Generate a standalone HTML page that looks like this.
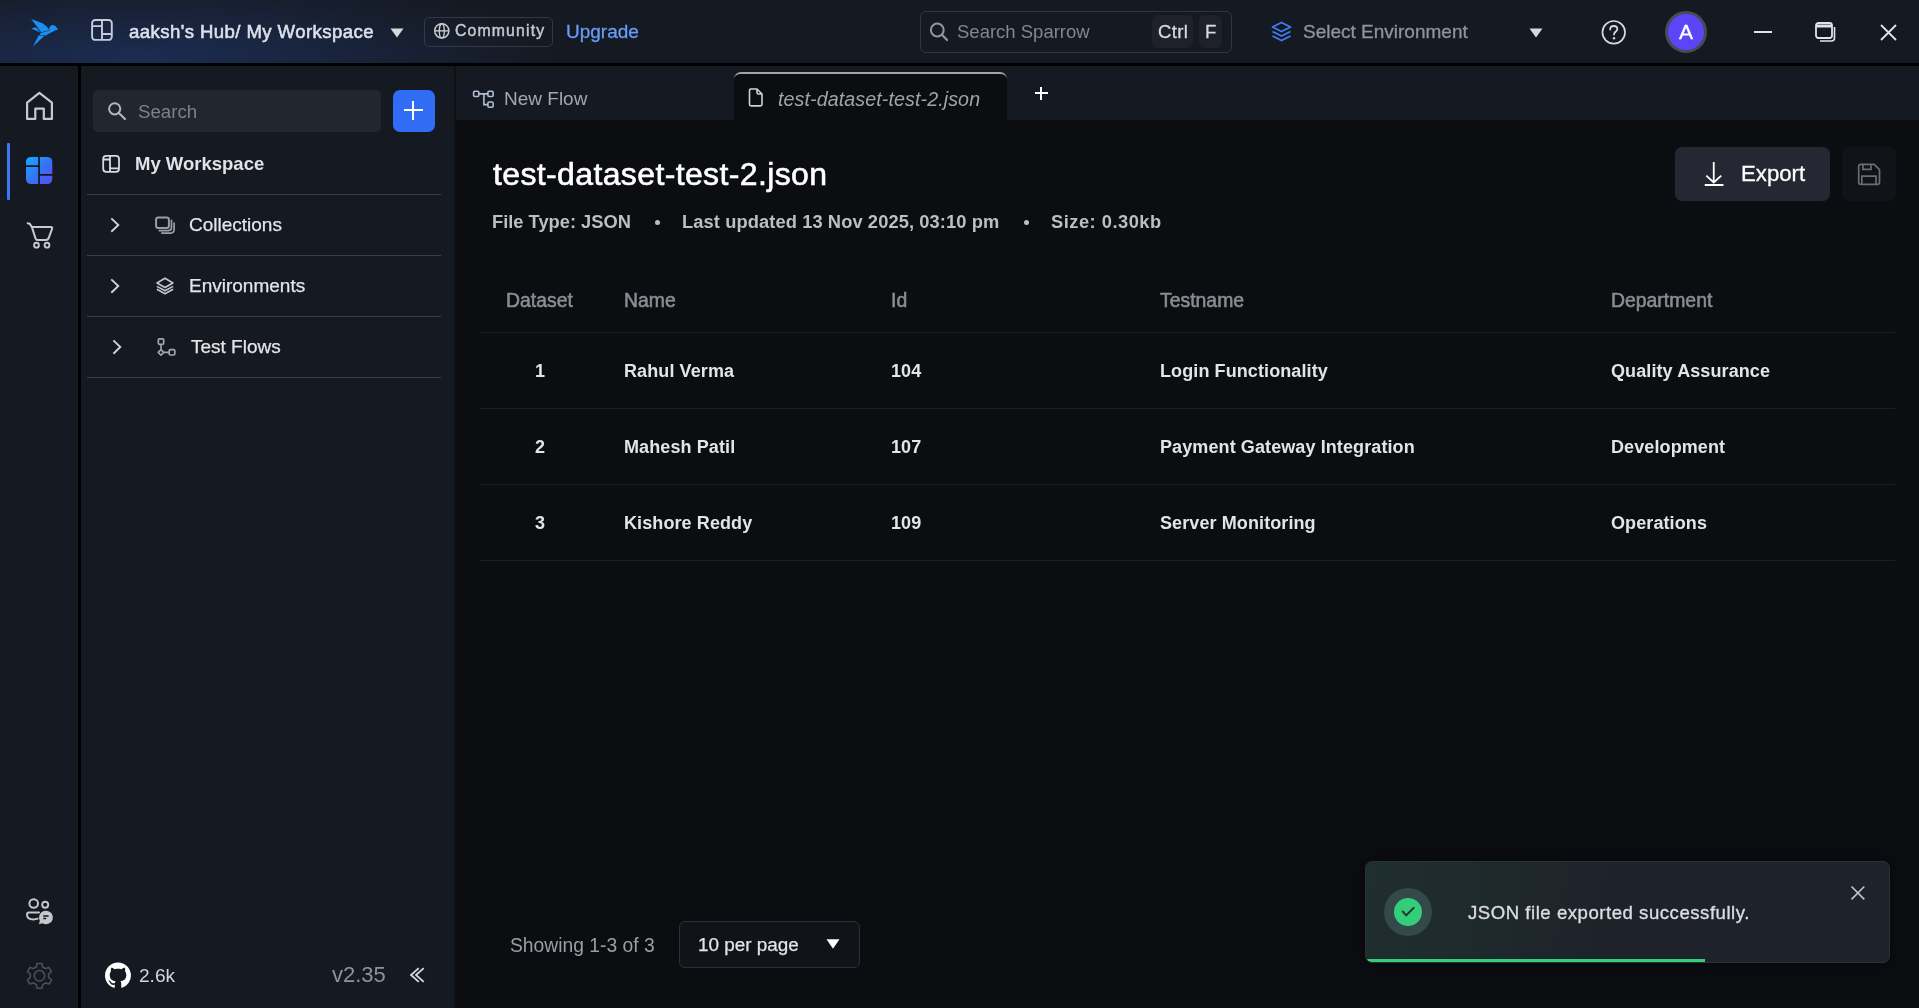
<!DOCTYPE html>
<html><head><meta charset="utf-8">
<style>
*{box-sizing:border-box;margin:0;padding:0}
html,body{width:1919px;height:1008px;overflow:hidden;background:#0b0d11;font-family:"Liberation Sans",sans-serif}
.a{position:absolute}
.t{position:absolute;line-height:1;white-space:nowrap;will-change:transform}
svg{position:absolute;overflow:visible}
#hdr{left:0;top:0;width:1919px;height:63px;background:#151922}
#glow{left:0;top:0;width:1919px;height:63px;background:radial-gradient(ellipse 420px 90px at 140px 63px,rgba(30,52,100,0.75),rgba(30,52,100,0) 100%)}
#sep{left:0;top:63px;width:1919px;height:3px;background:#000}
#bar{left:0;top:66px;width:78px;height:942px;background:#151921}
#vsep{left:78px;top:66px;width:3px;height:942px;background:#000}
#side{left:81px;top:66px;width:373px;height:942px;background:#151921}
#vsep2{left:454px;top:66px;width:2px;height:942px;background:#0f1115}
#main{left:456px;top:66px;width:1463px;height:942px;background:#0b0d11}
#tabs{left:456px;top:66px;width:1463px;height:54px;background:#151921}
.div{position:absolute;left:87px;width:354px;height:1px;background:#3a3e46}
.tdiv{position:absolute;left:480px;width:1415px;height:1px;background:#1b1e27}
.hd{color:#8a8d93;font-size:19.4px;-webkit-text-stroke:0.55px #8a8d93}
.cell{color:#e3e4e7;font-size:18px;font-weight:700;margin-top:-1px;letter-spacing:0.1px}
</style></head><body>
<div id="hdr" class="a"></div>
<div id="glow" class="a"></div>
<div id="sep" class="a"></div>
<div id="bar" class="a"></div>
<div id="vsep" class="a"></div>
<div id="side" class="a"></div>
<div id="vsep2" class="a"></div>
<div id="main" class="a"></div>
<div id="tabs" class="a"></div>

<!-- HEADER -->
<!-- logo -->
<svg style="left:25px;top:14px" width="40" height="36" viewBox="0 0 40 36">
  <g fill="#1a90f2">
  <path d="M6.2 5 L17.5 9.3 Q22 12 24.6 15.9 L16.2 18.2 Z"/>
  <path d="M6.2 14.4 Q10 13.1 11.6 13.8 L15.3 18.6 Z"/>
  <path d="M15 19.3 L24.4 16.4 Q23.8 11 27.5 10.9 Q30.6 10.9 31.6 13.5 L33.2 15.6 L30.4 16.2 L20.5 21.6 L15.5 21.2 Z"/>
  <path d="M13.6 21.2 L8 32.4 L19.2 22 Z"/>
  </g>
</svg>
<!-- workspace icon -->
<svg style="left:85px;top:12px" width="40" height="36" viewBox="0 0 40 36">
  <rect x="7.1" y="8" width="19.7" height="19.9" rx="3.2" fill="none" stroke="#c5cbdd" stroke-width="1.9"/>
  <path d="M17 8 V27.9 M7.1 14.1 H17 M17 22 H26.8" stroke="#c5cbdd" stroke-width="1.9" fill="none"/>
</svg>
<div class="t" style="left:129px;top:22.5px;font-size:18.6px;font-weight:400;color:#dde1ec;letter-spacing:0.41px;-webkit-text-stroke:0.55px #dde1ec">aaksh's Hub/ My Workspace</div>
<svg style="left:390px;top:28px" width="14" height="10" viewBox="0 0 14 10"><path d="M0.5 0.5 H13.5 L7 9.5 Z" fill="#d6d8dc"/></svg>

<div class="a" style="left:424px;top:17px;width:129px;height:30px;border:1px solid #343840;border-radius:5px"></div>
<svg style="left:420px;top:12px" width="40" height="40" viewBox="0 0 40 40">
  <circle cx="21.8" cy="18.85" r="7.1" fill="none" stroke="#c9cacd" stroke-width="1.5"/>
  <ellipse cx="21.8" cy="18.85" rx="2.5" ry="7.1" fill="none" stroke="#c9cacd" stroke-width="1.4"/>
  <path d="M14.7 18.85 H28.9" stroke="#c9cacd" stroke-width="1.4"/>
</svg>
<div class="t" style="left:454.5px;top:23px;font-size:15.8px;font-weight:400;color:#c8c9cc;letter-spacing:1.15px;-webkit-text-stroke:0.45px #c8c9cc">Community</div>
<div class="t" style="left:566px;top:22px;font-size:19px;color:#6a9cf6;-webkit-text-stroke:0.3px #6a9cf6">Upgrade</div>

<!-- search sparrow -->
<div class="a" style="left:920px;top:11px;width:312px;height:42px;border:1px solid #30343c;border-radius:6px"></div>
<svg style="left:930px;top:23px" width="18" height="18" viewBox="0 0 18 18">
  <circle cx="7.3" cy="7" r="6.4" fill="none" stroke="#93969c" stroke-width="2"/>
  <path d="M12 11.8 L17 17" stroke="#93969c" stroke-width="2.2" stroke-linecap="round"/>
</svg>
<div class="t" style="left:957px;top:23px;font-size:18.5px;color:#84878d">Search Sparrow</div>
<div class="a" style="left:1152px;top:15px;width:41px;height:33px;background:#1e212a;border-radius:6px"></div>
<div class="t" style="left:1158px;top:23px;font-size:18.5px;color:#d8dadd;letter-spacing:0.35px;-webkit-text-stroke:0.3px #d8dadd">Ctrl</div>
<div class="a" style="left:1199px;top:15px;width:23px;height:33px;background:#1e212a;border-radius:6px"></div>
<div class="t" style="left:1205px;top:23px;font-size:18.5px;color:#d8dadd;-webkit-text-stroke:0.3px #d8dadd">F</div>

<!-- env -->
<svg style="left:1271px;top:21px" width="21" height="21" viewBox="0 0 21 21">
  <path d="M10.5 1.5 L19.5 6 L10.5 10.5 L1.5 6 Z" fill="none" stroke="#3f7cf6" stroke-width="1.8" stroke-linejoin="round"/>
  <path d="M1.5 10.5 L10.5 15 L19.5 10.5 M1.5 15 L10.5 19.5 L19.5 15" fill="none" stroke="#3f7cf6" stroke-width="1.8" stroke-linejoin="round"/>
</svg>
<div class="t" style="left:1303px;top:22.3px;font-size:19px;color:#929498;-webkit-text-stroke:0.3px #929498">Select Environment</div>
<svg style="left:1529px;top:28px" width="14" height="10" viewBox="0 0 14 10"><path d="M0.5 0.5 H13.5 L7 9.5 Z" fill="#d6d8dc"/></svg>

<svg style="left:1601px;top:20px" width="26" height="25" viewBox="0 0 26 25">
  <circle cx="12.75" cy="12.3" r="11.3" fill="none" stroke="#d6d8dc" stroke-width="1.7"/>
  <path d="M9.2 9.5 C9.2 7.3 10.8 6 12.8 6 C14.8 6 16.3 7.3 16.3 9.2 C16.3 11.4 13 11.8 13 14.5" fill="none" stroke="#d6d8dc" stroke-width="1.8" stroke-linecap="round"/>
  <circle cx="13" cy="18.3" r="1.2" fill="#d6d8dc"/>
</svg>
<div class="a" style="left:1665px;top:11px;width:42px;height:42px;border-radius:50%;background:#5b45f6;border:3px solid #464b57"></div>
<div class="t" style="left:1678.5px;top:20.7px;font-size:21px;color:#fff;-webkit-text-stroke:0.3px #fff">A</div>
<div class="a" style="left:1754px;top:31px;width:18px;height:2px;background:#e1e3e7"></div>
<svg style="left:1815px;top:22px" width="21" height="20" viewBox="0 0 21 20">
  <rect x="1" y="1" width="16" height="15" rx="2.5" fill="none" stroke="#e1e3e7" stroke-width="1.8"/>
  <path d="M1 4 H17" stroke="#e1e3e7" stroke-width="3"/>
  <path d="M19.5 5 V16 Q19.5 19 16.5 19 H5" fill="none" stroke="#e1e3e7" stroke-width="1.6"/>
</svg>
<svg style="left:1880px;top:24px" width="17" height="17" viewBox="0 0 17 17">
  <path d="M1 1 L16 16 M16 1 L1 16" stroke="#e1e3e7" stroke-width="1.8"/>
</svg>

<!-- LEFT BAR -->
<svg style="left:20px;top:86px" width="40" height="40" viewBox="0 0 40 40">
  <path d="M7.1 32.9 V16.7 L19.4 6.9 L31.9 16.7 V32.9 H23.8 V22.6 H15.3 V32.9 Z" fill="none" stroke="#c8c9cc" stroke-width="2.2" stroke-linejoin="round"/>
</svg>
<div class="a" style="left:7px;top:143px;width:3px;height:57px;background:#3a78f6;border-radius:1px"></div>
<svg style="left:20px;top:150px" width="40" height="40" viewBox="0 0 40 40">
  <defs>
    <linearGradient id="wg" x1="0" y1="0" x2="1" y2="1">
      <stop offset="0" stop-color="#16acff"/><stop offset="0.5" stop-color="#3276f5"/><stop offset="1" stop-color="#5e48f7"/>
    </linearGradient>
    <mask id="wm"><rect x="0" y="0" width="40" height="40" fill="#fff"/>
      <path d="M19.05 0 V40 M0 16.2 H19.05 M19.05 24.9 H40" stroke="#000" stroke-width="1.7"/></mask>
  </defs>
  <rect x="6" y="6.9" width="26.3" height="27.2" rx="5" fill="url(#wg)" mask="url(#wm)"/>
</svg>
<svg style="left:20px;top:215px" width="40" height="40" viewBox="0 0 40 40">
  <path d="M7.7 8.3 Q10.2 8.3 10.9 10.6 L11.9 12.1 H31.6 Q32.6 12.4 32.2 13.4 L28.6 23.3 Q27.8 25 26 25 H17.6 Q16 25 15.5 23.4 L11.9 12.1" fill="none" stroke="#c8c9cc" stroke-width="2" stroke-linecap="round" stroke-linejoin="round"/>
  <circle cx="16.5" cy="30.2" r="2.4" fill="none" stroke="#c8c9cc" stroke-width="1.9"/>
  <circle cx="27" cy="30.2" r="2.4" fill="none" stroke="#c8c9cc" stroke-width="1.9"/>
</svg>

<!-- SIDEBAR -->
<div class="a" style="left:93px;top:90px;width:288px;height:42px;background:#22262f;border-radius:5px"></div>
<svg style="left:90px;top:86px" width="40" height="40" viewBox="0 0 40 40">
  <circle cx="24.7" cy="22.8" r="5.6" fill="none" stroke="#b4b6bb" stroke-width="2"/>
  <path d="M28.8 27 L35 33" stroke="#b4b6bb" stroke-width="2.2" stroke-linecap="round"/>
</svg>
<div class="t" style="left:138px;top:103px;font-size:18.7px;color:#7d8188">Search</div>
<div class="a" style="left:393px;top:90px;width:42px;height:42px;background:#316cf4;border-radius:7px"></div>
<div class="a" style="left:404px;top:109.3px;width:19px;height:2px;background:#fff"></div>
<div class="a" style="left:412.4px;top:101px;width:2px;height:19px;background:#fff"></div>

<svg style="left:95px;top:145px" width="40" height="40" viewBox="0 0 40 40">
  <rect x="8.2" y="10.8" width="15.8" height="16" rx="3" fill="none" stroke="#d8d9dd" stroke-width="1.8"/>
  <path d="M15 10.8 V26.8 M8.2 14.5 H15 M15 23.4 H24" stroke="#d8d9dd" stroke-width="1.8" fill="none"/>
</svg>
<div class="t" style="left:135px;top:155px;font-size:18.5px;font-weight:700;color:#e2e3e7">My Workspace</div>
<div class="div" style="top:194px"></div>
<div class="div" style="top:255px"></div>
<div class="div" style="top:316px"></div>
<div class="div" style="top:377px"></div>

<!-- sidebar items -->
<svg style="left:100px;top:205px" width="90" height="40" viewBox="0 0 90 40">
  <path d="M11.3 13.4 L18.3 20 L11.3 26.7" fill="none" stroke="#d0d1d4" stroke-width="1.9"/>
  <rect x="56.1" y="12.4" width="12.8" height="10.6" rx="2.2" fill="none" stroke="#9b9ea4" stroke-width="2"/>
  <path d="M71.5 14.8 V22.6 Q71.5 25.6 68.5 25.6 H58.6" fill="none" stroke="#9b9ea4" stroke-width="1.7"/>
  <path d="M74.1 17.6 V24.6 Q74.1 28.1 70.6 28.1 H61.2" fill="none" stroke="#9b9ea4" stroke-width="1.7"/>
</svg>
<div class="t" style="left:189px;top:215px;font-size:19px;color:#e4e5e8;-webkit-text-stroke:0.25px #e4e5e8">Collections</div>

<svg style="left:100px;top:266px" width="90" height="40" viewBox="0 0 90 40">
  <path d="M11.3 13.4 L18.3 20 L11.3 26.7" fill="none" stroke="#d0d1d4" stroke-width="1.9"/>
  <path d="M57 16.9 L65 12.2 L72.9 16.9 L65 21.5 Z" fill="none" stroke="#c4c5c9" stroke-width="1.7" stroke-linejoin="round"/>
  <path d="M56.9 20.4 L65 24.8 L73.1 20.4 M56.9 23.3 L65 27.8 L73.1 23.3" fill="none" stroke="#c4c5c9" stroke-width="1.6" stroke-linejoin="round"/>
</svg>
<div class="t" style="left:189px;top:276px;font-size:19px;color:#e4e5e8;-webkit-text-stroke:0.25px #e4e5e8">Environments</div>

<svg style="left:100px;top:327px" width="90" height="40" viewBox="0 0 90 40">
  <path d="M13.4 13.4 L20.3 20 L13.4 26.7" fill="none" stroke="#d0d1d4" stroke-width="1.9"/>
  <rect x="58.3" y="11.9" width="5.4" height="5.4" rx="1.2" fill="none" stroke="#a3a6ab" stroke-width="1.7"/>
  <rect x="69.2" y="22.6" width="5.6" height="5.4" rx="1.2" fill="none" stroke="#a3a6ab" stroke-width="1.7"/>
  <path d="M61 17.3 V22.6 M61 22.6 L63.8 25.4 L61 28.2 L58.2 25.4 Z M63.8 25.4 H69.2" fill="none" stroke="#a3a6ab" stroke-width="1.6" stroke-linejoin="round"/>
</svg>
<div class="t" style="left:191px;top:337px;font-size:19px;color:#e4e5e8;-webkit-text-stroke:0.25px #e4e5e8">Test Flows</div>

<!-- bottom left -->
<svg style="left:20px;top:892px" width="40" height="40" viewBox="0 0 40 40">
  <circle cx="13.7" cy="11.5" r="4.3" fill="none" stroke="#c6c7cb" stroke-width="2"/>
  <circle cx="25.2" cy="12.8" r="3" fill="none" stroke="#c6c7cb" stroke-width="1.9"/>
  <path d="M19 20.4 H9 Q7 20.4 7 22.5 Q7 27.4 13.5 27.4 Q16 27.4 17.7 26.7" fill="none" stroke="#c6c7cb" stroke-width="2" stroke-linecap="round"/>
  <path d="M26 18.7 A6.8 6.8 0 1 1 22.4 31.2 L19 32.2 L19.8 28.6 A6.8 6.8 0 0 1 26 18.7 Z" fill="#c6c7cb"/>
  <path d="M23.2 24 H28.6 M23.2 26.5 H26.2" stroke="#151921" stroke-width="1.3"/>
</svg>
<svg style="left:20px;top:956px" width="40" height="40" viewBox="0 0 40 40">
  <path id="gear" d="M17 7.5 H22 L22.6 11 L25.5 12.6 L28.9 11.4 L31.4 15.7 L28.6 18 V21.4 L31.6 23.8 L29.1 28 L25.6 26.9 L22.7 28.6 L22 32.2 H17 L16.3 28.6 L13.4 26.9 L9.9 28 L7.4 23.8 L10.3 21.4 V18 L7.5 15.7 L10 11.4 L13.4 12.6 L16.3 11 Z" fill="none" stroke="#4a505d" stroke-width="1.6" stroke-linejoin="round"/>
  <circle cx="19.5" cy="19.8" r="5.2" fill="none" stroke="#4a505d" stroke-width="1.5"/>
</svg>
<svg style="left:105px;top:962px" width="26" height="27" viewBox="0 0 16 16">
  <path fill="#fff" d="M8 0C3.58 0 0 3.58 0 8c0 3.54 2.29 6.53 5.47 7.59.4.07.55-.17.55-.38 0-.19-.01-.82-.01-1.49-2.01.37-2.53-.49-2.69-.94-.09-.23-.48-.94-.82-1.13-.28-.15-.68-.52-.01-.53.63-.01 1.08.58 1.23.82.72 1.21 1.87.87 2.33.66.07-.52.28-.87.51-1.07-1.78-.2-3.64-.89-3.64-3.95 0-.87.31-1.59.82-2.15-.08-.2-.36-1.02.08-2.12 0 0 .67-.21 2.2.82.64-.18 1.32-.27 2-.27.68 0 1.36.09 2 .27 1.53-1.04 2.2-.82 2.2-.82.44 1.1.16 1.92.08 2.12.51.56.82 1.27.82 2.15 0 3.07-1.87 3.75-3.65 3.95.29.25.54.73.54 1.48 0 1.07-.01 1.93-.01 2.2 0 .21.15.46.55.38A8.013 8.013 0 0016 8c0-4.42-3.58-8-8-8z"/>
</svg>
<div class="t" style="left:138.5px;top:965.5px;font-size:19.1px;color:#d5d6d9">2.6k</div>
<div class="t" style="left:332px;top:963.5px;font-size:22px;color:#8d939c">v2.35</div>
<svg style="left:405px;top:963px" width="25" height="25" viewBox="0 0 25 25">
  <path d="M13.75 5.1 L6 12 L13.75 18.9 M18.75 5.1 L11 12 L18.75 18.9" fill="none" stroke="#d8d9dc" stroke-width="1.8"/>
</svg>

<!-- TABS -->
<svg style="left:462px;top:78px" width="40" height="40" viewBox="0 0 40 40">
  <rect x="11.6" y="13.3" width="5.2" height="5.2" rx="1.2" fill="none" stroke="#afbfd6" stroke-width="1.6"/>
  <rect x="25.9" y="13.3" width="5.2" height="5.2" rx="1.2" fill="none" stroke="#afbfd6" stroke-width="1.6"/>
  <rect x="25.9" y="24" width="5.2" height="5.2" rx="1.2" fill="none" stroke="#afbfd6" stroke-width="1.6"/>
  <path d="M16.8 15.9 H25.9 M21.9 15.9 V26.6 H25.9" fill="none" stroke="#afbfd6" stroke-width="1.6"/>
</svg>
<div class="t" style="left:503.5px;top:89px;font-size:19px;color:#a5a7ab">New Flow</div>
<div class="a" style="left:734px;top:72px;width:273px;height:48px;background:#0b0d11;border-top:2.5px solid #a3a5a9;border-radius:7px 7px 0 0"></div>
<svg style="left:745px;top:86px" width="22" height="22" viewBox="0 0 22 22">
  <path d="M5.5 3 H12 L17 8 V18.3 Q17 19.9 15.4 19.9 H6.1 Q4.5 19.9 4.5 18.3 V4.6 Q4.5 3 6.1 3 Z M12 3 V6.6 Q12 8 13.4 8 H17" fill="none" stroke="#d0d1d4" stroke-width="1.6" stroke-linejoin="round"/>
</svg>
<div class="t" style="left:777.5px;top:89.5px;font-size:19.7px;font-style:italic;color:#a1a3a7;letter-spacing:0.08px">test-dataset-test-2.json</div>
<div class="a" style="left:1034.5px;top:92.3px;width:13px;height:2px;background:#fff"></div>
<div class="a" style="left:1040px;top:86.8px;width:2px;height:13px;background:#fff"></div>

<!-- CONTENT -->
<div class="t" style="left:493px;top:158.4px;font-size:32px;color:#fff;-webkit-text-stroke:0.6px #fff;letter-spacing:0.37px">test-dataset-test-2.json</div>
<div class="t" style="left:492px;top:212.5px;font-size:18.3px;font-weight:700;color:#bdbec2">File Type: JSON</div>
<div class="a" style="left:654.5px;top:220px;width:5px;height:5px;border-radius:50%;background:#bdbec2"></div>
<div class="t" style="left:682px;top:212.5px;font-size:18.3px;font-weight:700;color:#bdbec2;letter-spacing:0.1px">Last updated 13 Nov 2025, 03:10 pm</div>
<div class="a" style="left:1023.5px;top:220px;width:5px;height:5px;border-radius:50%;background:#bdbec2"></div>
<div class="t" style="left:1051px;top:212.5px;font-size:18.3px;font-weight:700;color:#bdbec2;letter-spacing:0.5px">Size: 0.30kb</div>

<div class="a" style="left:1675px;top:147px;width:155px;height:54px;background:#252733;border-radius:7px"></div>
<svg style="left:1700px;top:158px" width="30" height="32" viewBox="0 0 30 32">
  <path d="M13.75 3.9 V24.5 M6.25 17.6 L13.75 24.5 L21.25 17.6 M4.75 27 H23.5" fill="none" stroke="#fff" stroke-width="1.8"/>
</svg>
<div class="t" style="left:1741px;top:162.5px;font-size:22.2px;color:#fff;-webkit-text-stroke:0.3px #fff">Export</div>
<div class="a" style="left:1842px;top:147px;width:54px;height:54px;background:#111318;border-radius:7px"></div>
<svg style="left:1855px;top:160px" width="28" height="28" viewBox="0 0 28 28">
  <path d="M5.8 4.3 H19.2 L24.5 9.6 V22.2 Q24.5 24.3 22.4 24.3 H5.8 Q3.7 24.3 3.7 22.2 V6.4 Q3.7 4.3 5.8 4.3 Z" fill="none" stroke="#6a6d73" stroke-width="1.7" stroke-linejoin="round"/>
  <path d="M7.9 4.3 V9.4 H16 V4.3 M6.8 24.3 V16.2 H21 V24.3" fill="none" stroke="#6a6d73" stroke-width="1.7"/>
</svg>

<!-- TABLE -->
<div class="t hd" style="left:506px;top:291px">Dataset</div>
<div class="t hd" style="left:623.5px;top:291px">Name</div>
<div class="t hd" style="left:891px;top:291px">Id</div>
<div class="t hd" style="left:1159.5px;top:291px">Testname</div>
<div class="t hd" style="left:1610.5px;top:291px">Department</div>
<div class="tdiv" style="top:332px"></div>

<div class="t cell" style="left:535px;top:362.5px">1</div>
<div class="t cell" style="left:624px;top:362.5px">Rahul Verma</div>
<div class="t cell" style="left:891px;top:362.5px">104</div>
<div class="t cell" style="left:1159.5px;top:362.5px">Login Functionality</div>
<div class="t cell" style="left:1610.5px;top:362.5px">Quality Assurance</div>
<div class="tdiv" style="top:408px"></div>

<div class="t cell" style="left:535px;top:438.5px">2</div>
<div class="t cell" style="left:624px;top:438.5px">Mahesh Patil</div>
<div class="t cell" style="left:891px;top:438.5px">107</div>
<div class="t cell" style="left:1159.5px;top:438.5px">Payment Gateway Integration</div>
<div class="t cell" style="left:1610.5px;top:438.5px">Development</div>
<div class="tdiv" style="top:484px"></div>

<div class="t cell" style="left:535px;top:514.5px">3</div>
<div class="t cell" style="left:624px;top:514.5px">Kishore Reddy</div>
<div class="t cell" style="left:891px;top:514.5px">109</div>
<div class="t cell" style="left:1159.5px;top:514.5px">Server Monitoring</div>
<div class="t cell" style="left:1610.5px;top:514.5px">Operations</div>
<div class="tdiv" style="top:560px"></div>

<!-- PAGINATION -->
<div class="t" style="left:510px;top:936px;font-size:19.3px;color:#9a9ea5">Showing 1-3 of 3</div>
<div class="a" style="left:679px;top:921px;width:181px;height:47px;background:#111318;border:1px solid #2c3038;border-radius:6px"></div>
<div class="t" style="left:697.5px;top:936px;font-size:18.9px;color:#e3e4e7;-webkit-text-stroke:0.25px #e3e4e7">10 per page</div>
<svg style="left:826px;top:939px" width="14" height="10" viewBox="0 0 14 10"><path d="M0.5 0.3 H13.5 L7 9.8 Z" fill="#fff"/></svg>

<!-- TOAST -->
<div class="a" style="left:1365px;top:861px;width:525px;height:102px;border-radius:7px;border:1px solid #2b3036;box-shadow:0 0 18px rgba(0,0,0,0.45);background:linear-gradient(100deg,#1f2e2e 0%,#1f2b2d 18%,#1e252b 36%,#1e222a 50%,#1e222a 100%);overflow:hidden">
  <div class="a" style="left:0;bottom:0;width:339px;height:3.5px;background:#34cf7d"></div>
</div>
<div class="a" style="left:1384px;top:888px;width:48px;height:48px;border-radius:50%;background:#34494a"></div>
<div class="a" style="left:1393.7px;top:897.7px;width:28.6px;height:28.6px;border-radius:50%;background:#34cd79"></div>
<svg style="left:1360px;top:855px" width="120" height="115" viewBox="0 0 120 115">
  <path d="M42.2 55.9 L46.2 60.3 L54.2 52.4" fill="none" stroke="#25342f" stroke-width="2"/>
</svg>
<div class="t" style="left:1468px;top:903.5px;font-size:18.6px;color:#dcdde0;-webkit-text-stroke:0.35px #dcdde0;letter-spacing:0.52px">JSON file exported successfully.</div>
<svg style="left:1848px;top:883px" width="20" height="20" viewBox="0 0 20 20">
  <path d="M3.5 3.5 L16.3 16.3 M16.3 3.5 L3.5 16.3" stroke="#bfc1c5" stroke-width="1.7"/>
</svg>

</body></html>
